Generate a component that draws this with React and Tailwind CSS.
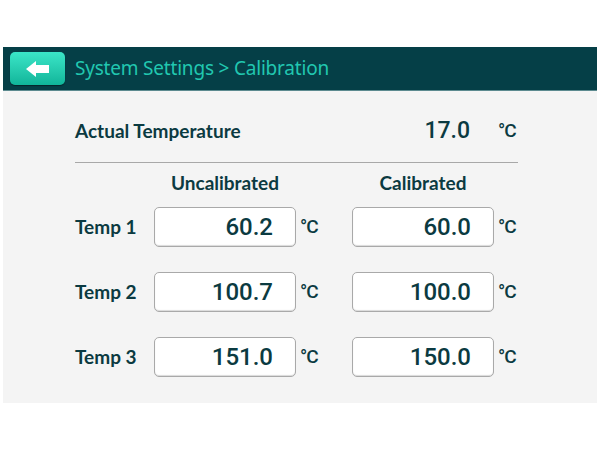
import React from 'react';

const rows = [
  { label: 'Temp 1', raw: '60.2', cal: '60.0' },
  { label: 'Temp 2', raw: '100.7', cal: '100.0' },
  { label: 'Temp 3', raw: '151.0', cal: '150.0' },
];

function ValueBox({ value }) {
  return (
    <div className="h-[40px] w-[142px] rounded-[5px] border border-[#a9a9a9] bg-white shadow-[inset_0_-1px_1px_rgba(0,0,0,0.15)] flex items-center justify-end pr-[22px] text-[24px] font-medium text-[#0b3a41] font-['Roboto',sans-serif]">
      {value}
    </div>
  );
}

function Unit() {
  return <div className="pl-[4px] text-[19px] font-medium text-[#0b3a41] font-['Roboto',sans-serif] tracking-[-1px]">°C</div>;
}

export default function App() {
  return (
    <div className="w-[600px] h-[450px] bg-white pt-[47px] px-[3px]">
      <div className="w-[594px] h-[356px] bg-[#f4f4f4] flex flex-col">
        {/* header bar */}
        <div className="h-[44px] bg-[#053f47] flex items-center pl-[7px] border-b border-[#5c8a8f]">
          <button className="w-[55px] h-[33px] rounded-[5px] bg-gradient-to-b from-[#3ae6c8] to-[#0fb59a] shadow-[0_1px_1px_rgba(0,0,0,0.4)] flex items-center justify-center">
            <svg width="30" height="20" viewBox="0 0 30 20">
              <path d="M3 10 L13 2 L13 6 L26 6 L26 14 L13 14 L13 18 Z" fill="#ffffff" />
            </svg>
          </button>
          <span className="ml-[10px] text-[19px] text-[#21c7b0] font-['Noto_Sans',sans-serif] tracking-[-0.2px]">
            System Settings &gt; Calibration
          </span>
        </div>

        {/* content */}
        <div className="pl-[72px] pt-[23px] font-['Lato',sans-serif] text-[#0b3a41]">
          <div className="grid grid-cols-[79px_142px_56px_142px_auto] items-center h-[28px]">
            <div className="col-span-3 text-[19px] font-bold whitespace-nowrap">Actual Temperature</div>
            <div className="text-right pr-[24px] text-[23px] font-medium font-['Roboto',sans-serif]">17.0</div>
            <Unit />
          </div>
          <div className="w-[443px] h-px bg-[#a8a8a8] mt-[20px]" />
          <div className="grid grid-cols-[79px_142px_56px_142px_auto] items-center mt-[6px] h-[24px] text-[19px] font-bold">
            <div />
            <div className="text-center whitespace-nowrap">Uncalibrated</div>
            <div />
            <div className="text-center whitespace-nowrap">Calibrated</div>
          </div>
          <div className="flex flex-col gap-[25px] mt-[14px]">
            {rows.map(r => (
              <div key={r.label} className="grid grid-cols-[79px_142px_56px_142px_auto] items-center">
                <div className="text-[19px] font-bold whitespace-nowrap">{r.label}</div>
                <ValueBox value={r.raw} />
                <Unit />
                <ValueBox value={r.cal} />
                <Unit />
              </div>
            ))}
          </div>
        </div>
      </div>
    </div>
  );
}
